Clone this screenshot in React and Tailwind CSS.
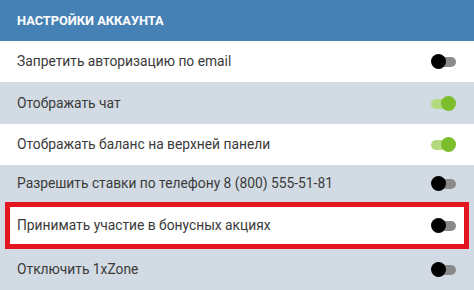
import React from "react";

const rows = [
  { label: "Запретить авторизацию по email", on: false, bg: "bg-white", h: "h-[41px]" },
  { label: "Отображать чат", on: true, bg: "bg-[#d2dbe3]", h: "h-[42px]" },
  { label: "Отображать баланс на верхней панели", on: true, bg: "bg-white", h: "h-[41px]" },
  { label: "Разрешить ставки по телефону 8 (800) 555-51-81", on: false, bg: "bg-[#d2dbe3]", h: "h-[37px]" },
];

const Toggle = ({ on }) =>
  on ? (
    <div className="relative w-[25px] h-[15px]">
      <div className="absolute left-0 top-[3px] w-[20px] h-[10px] rounded-full bg-[#b3da7f]" />
      <div className="absolute right-0 top-0 w-[15px] h-[15px] rounded-full bg-[#7cbd2c]" />
    </div>
  ) : (
    <div className="relative w-[25px] h-[15px]">
      <div className="absolute right-0 top-[3px] w-[18px] h-[10px] rounded-full bg-[#8a8a8a]" />
      <div className="absolute left-0 top-0 w-[15px] h-[15px] rounded-full bg-black" />
    </div>
  );

const Row = ({ label, on, className }) => (
  <div className={`flex items-center justify-between pl-[17px] pr-[18px] ${className}`}>
    <span className="text-[13.8px] text-[#3a3a3a]">{label}</span>
    <Toggle on={on} />
  </div>
);

export default function App() {
  return (
    <div className="w-[474px] h-[290px] bg-[#d2dbe3] overflow-hidden" style={{ fontFamily: "Roboto, sans-serif" }}>
      <div className="h-[41px] bg-[#4681b5] flex items-center pl-[17px]">
        <span className="text-white font-bold text-[12.8px] uppercase">Настройки аккаунта</span>
      </div>
      {rows.map((r) => (
        <Row key={r.label} label={r.label} on={r.on} className={`${r.bg} ${r.h}`} />
      ))}
      <div className="h-[47px] px-[5px]">
        <div className="h-full border-[5px] border-[#e3151f] bg-white flex items-center justify-between pl-[7px] pr-[8px]">
          <span className="text-[13.8px] text-[#3a3a3a]">Принимать участие в бонусных акциях</span>
          <Toggle on={false} />
        </div>
      </div>
      <Row label="Отключить 1xZone" on={false} className="bg-[#d2dbe3] h-[41px]" />
    </div>
  );
}
